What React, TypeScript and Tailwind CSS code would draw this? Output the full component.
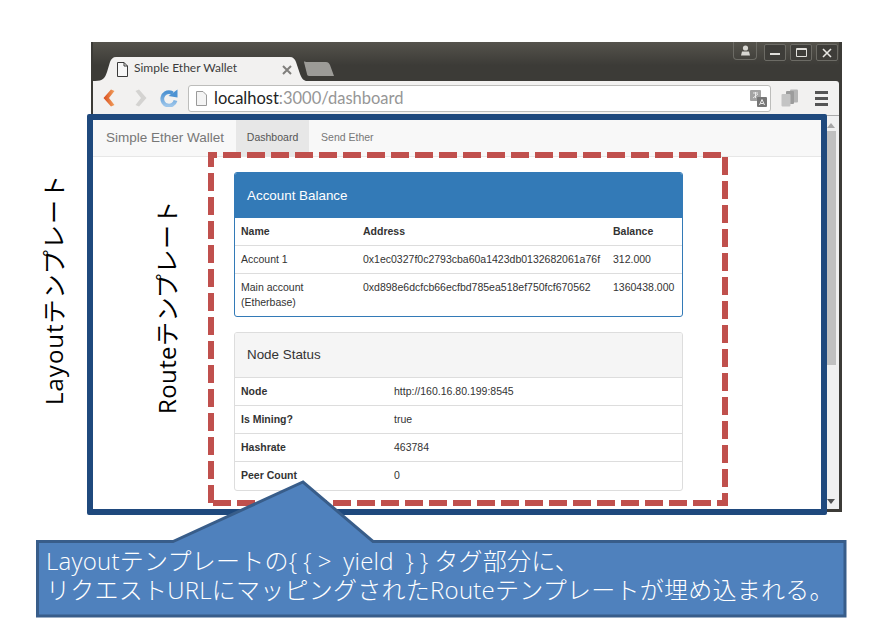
import React from 'react';

const balances = [
  { name: 'Account 1', address: '0x1ec0327f0c2793cba60a1423db0132682061a76f', balance: '312.000' },
  { name: 'Main account (Etherbase)', address: '0xd898e6dcfcb66ecfbd785ea518ef750fcf670562', balance: '1360438.000' },
];

const nodeStatus = [
  { label: 'Node', value: 'http://160.16.80.199:8545' },
  { label: 'Is Mining?', value: 'true' },
  { label: 'Hashrate', value: '463784' },
  { label: 'Peer Count', value: '0' },
];

function WindowButton({ children }: { children: React.ReactNode }) {
  return (
    <div className="flex h-[17px] w-[22px] items-center justify-center rounded-[2px] border border-[#6c6b65] bg-[#3e3d39]">
      {children}
    </div>
  );
}

function TitleBar() {
  return (
    <div className="relative h-[39px] shrink-0 bg-gradient-to-b from-[#55534c] to-[#3c3b37] to-60%">
      {/* tab */}
      <svg className="absolute left-[2px] top-[15px]" width="240" height="25" viewBox="0 0 240 25">
        <path d="M0 24 C8 24 10 21 12 15 L15 5 C16 2 18 0 21 0 L195 0 C198 0 200 2 201 5 L205 17 C207 22 209 24 212 24 Z" fill="#f2f1f0" />
        <path d="M209 5 C209 4 210 5 212 5 L231 5 C233 5 234 6 235 8 L239 19 L214 19 C213 19 212 18 212 17 Z" fill="#9c9b97" />
      </svg>
      <svg className="absolute left-[24px] top-[20px]" width="11" height="15" viewBox="0 0 11 15">
        <path d="M0.5 0.5 H7 L10.5 4 V14.5 H0.5 Z M7 0.5 V4 H10.5" fill="#f7f7f7" stroke="#3a3a3a" strokeWidth="1" />
      </svg>
      <span className="absolute left-[41px] top-[18px] font-['Lato',sans-serif] text-[12px] leading-[16px] text-[#3c3c3c]">
        Simple Ether Wallet
      </span>
      <svg className="absolute left-[189px] top-[23px]" width="10" height="10" viewBox="0 0 10 10">
        <path d="M1 1 L9 9 M9 1 L1 9" stroke="#807f7c" strokeWidth="2" />
      </svg>
      {/* window controls */}
      <div className="absolute right-[1px] top-0 flex items-start">
        <div className="mr-[7px] flex h-[18px] w-[24px] items-center justify-center rounded-b-[4px] border border-t-0 border-[#6c6b65]">
          <svg width="11" height="11" viewBox="0 0 11 11">
            <circle cx="5.5" cy="3" r="2.6" fill="#d8d7d2" />
            <path d="M1 10.5 L2 6.5 H9 L10 10.5 Z" fill="#d8d7d2" />
          </svg>
        </div>
        <div className="mt-[2px] flex gap-[4px]">
          <WindowButton>
            <div className="mt-[3px] h-[2px] w-[10px] bg-[#e0dfdb]" />
          </WindowButton>
          <WindowButton>
            <div className="h-[9px] w-[11px] rounded-[1px] border border-t-2 border-[#e0dfdb]" />
          </WindowButton>
          <WindowButton>
            <svg width="10" height="10" viewBox="0 0 10 10">
              <path d="M1 1 L9 9 M9 1 L1 9" stroke="#e8e7e3" strokeWidth="1.6" />
            </svg>
          </WindowButton>
        </div>
      </div>
    </div>
  );
}

function Toolbar() {
  return (
    <div className="flex h-[35px] shrink-0 items-center rounded-tr-[3px] border-b border-[#a9a9a9] bg-[#f2f1f0]">
      <svg className="ml-[10px]" width="12" height="18" viewBox="0 0 12 18">
        <defs>
          <linearGradient id="back" x1="0" y1="0" x2="1" y2="0">
            <stop offset="0" stopColor="#d84a1b" />
            <stop offset="1" stopColor="#f1a25f" />
          </linearGradient>
          <linearGradient id="reload" x1="0" y1="0" x2="0" y2="1">
            <stop offset="0" stopColor="#4d92d2" />
            <stop offset="1" stopColor="#9cc5ea" />
          </linearGradient>
        </defs>
        <path d="M8 0.5 L11.5 2 L6 9 L11.5 16 L8 17.5 L0.5 9 Z" fill="url(#back)" />
      </svg>
      <svg className="ml-[20px]" width="12" height="18" viewBox="0 0 12 18">
        <path d="M4 0.5 L0.5 2 L6 9 L0.5 16 L4 17.5 L11.5 9 Z" fill="#d4d3d1" />
      </svg>
      <svg className="ml-[13px]" width="18" height="18" viewBox="0 0 18 18">
        <path d="M15.5 11.5 A6.7 6.7 0 1 1 10.5 3.4 A6.7 6.7 0 0 1 12.5 4.4" fill="none" stroke="url(#reload)" strokeWidth="3.8" />
        <path d="M8.5 7 L17.5 8.5 L17.5 0.5 Z" fill="#4d92d2" />
      </svg>
      <div className="relative ml-[10px] flex h-[27px] w-[583px] items-center rounded-[3px] border border-[#bdbdbb] bg-white">
        <svg className="ml-[7px]" width="11" height="15" viewBox="0 0 11 15">
          <path d="M0.5 0.5 H7 L10.5 4 V14.5 H0.5 Z" fill="#f4f4f4" stroke="#9a9a9a" strokeWidth="1" />
        </svg>
        <span className="ml-[7px] font-['Lato',sans-serif] text-[16.5px] leading-[20px] text-[#222]">
          localhost<span className="text-[#969696]">:3000/dashboard</span>
        </span>
        <svg className="absolute left-[561px] top-[4px]" width="17" height="17" viewBox="0 0 17 17">
          <rect x="0" y="0" width="11" height="11" rx="1" fill="#a3a3a3" />
          <rect x="7" y="7" width="10" height="10" rx="1" fill="#777" />
          <path d="M3 3 H8 M5.5 2 V8 M3 8 L8 4" stroke="#eee" strokeWidth="0.9" fill="none" />
          <path d="M9.5 15 L12 9.5 L14.5 15 M10.5 13.5 H13.5" stroke="#eee" strokeWidth="1" fill="none" />
        </svg>
      </div>
      <svg className="ml-[10px]" width="18" height="18" viewBox="0 0 18 18">
        <rect x="9" y="0.5" width="8" height="13" rx="1" fill="#b5b5b5" />
        <rect x="5" y="2" width="8" height="13" rx="1" fill="#9c9c9c" />
        <rect x="0.5" y="5" width="9" height="12.5" rx="1" fill="#c4c4c4" />
      </svg>
      <div className="ml-[16px] flex flex-col gap-[3px]">
        <div className="h-[3px] w-[13px] bg-[#555]" />
        <div className="h-[3px] w-[13px] bg-[#555]" />
        <div className="h-[3px] w-[13px] bg-[#555]" />
      </div>
    </div>
  );
}

function Scrollbar() {
  return (
    <div className="flex w-[13px] shrink-0 flex-col items-start bg-[#f0f0f0]">
      <div className="ml-[1px] mt-[7px] h-0 w-0 border-x-[4px] border-b-[5px] border-x-transparent border-b-[#a6a6a6]" />
      <div className="mt-[3px] h-[234px] w-[10px] bg-[#c0c0c0]" />
      <div className="ml-[1px] mt-[134px] h-0 w-0 border-x-[4px] border-t-[5px] border-x-transparent border-t-[#505050]" />
    </div>
  );
}

function Navbar() {
  return (
    <div className="flex h-[41px] items-stretch border-b border-[#e7e7e7] bg-[#f8f8f8] pl-[13px] text-[#777]">
      <span className="flex items-center pt-[2px] text-[13.5px]">Simple Ether Wallet</span>
      <span className="ml-[12px] flex w-[73px] items-center justify-center bg-[#e7e7e7] pt-[2px] text-[10.5px] text-[#555]">Dashboard</span>
      <span className="ml-[12px] flex items-center pt-[2px] text-[10.5px]">Send Ether</span>
    </div>
  );
}

function Page() {
  return (
    <div className="flex-1 overflow-hidden bg-white font-['Liberation_Sans',sans-serif] text-[10.5px] leading-[15px] text-[#333]">
      <Navbar />
      <div className="ml-[141px] mt-[15px] w-[449px]">
        <div className="overflow-hidden rounded-[3px] border border-[#337ab7]">
          <div className="flex h-[45px] items-center bg-[#337ab7] pb-[1px] pl-[12px] text-[13.4px] text-white">Account Balance</div>
          <table className="w-full table-fixed border-collapse">
            <thead>
              <tr className="h-[27px] border-b border-[#ddd] text-left font-bold">
                <th className="w-[122px] pl-[6px]">Name</th>
                <th className="w-[250px] pl-[6px]">Address</th>
                <th className="pl-[6px]">Balance</th>
              </tr>
            </thead>
            <tbody>
              {balances.map((row, i) => (
                <tr key={row.name} className={i === 0 ? 'border-b border-[#ddd]' : ''}>
                  <td className="py-[6px] pl-[6px] pr-[14px] align-top">{row.name}</td>
                  <td className="py-[6px] pl-[6px] align-top">{row.address}</td>
                  <td className="py-[6px] pl-[6px] align-top">{row.balance}</td>
                </tr>
              ))}
            </tbody>
          </table>
        </div>

        <div className="mt-[15px] overflow-hidden rounded-[3px] border border-[#ddd]">
          <div className="flex h-[45px] items-center border-b border-[#ddd] bg-[#f5f5f5] pl-[12px] text-[13.4px]">Node Status</div>
          <table className="w-full table-fixed border-collapse">
            <tbody>
              {nodeStatus.map((row, i) => (
                <tr key={row.label} className={`h-[28px] ${i < 3 ? 'border-b border-[#ddd]' : ''}`}>
                  <td className="w-[153px] pl-[6px] font-bold">{row.label}</td>
                  <td className="pl-[6px]">{row.value}</td>
                </tr>
              ))}
            </tbody>
          </table>
        </div>
      </div>
    </div>
  );
}

export default function App() {
  return (
    <div className="relative h-[643px] w-[877px] overflow-hidden bg-white pl-[91px] pt-[42px]">
      {/* browser window */}
      <div className="flex h-[470px] w-[751px] flex-col bg-[#3c3b37] pb-[3px] pl-[2px] pr-[3px]">
        <TitleBar />
        <Toolbar />
        <div className="flex min-h-0 flex-1">
          <Page />
          <Scrollbar />
        </div>
      </div>

      {/* annotations */}
      <div className="absolute left-[87px] top-[114px] h-[401px] w-[740px] rounded-[2px] border-[6px] border-[#1f497d]" />
      <svg className="absolute left-0 top-0" width="877" height="643" viewBox="0 0 877 643">
        <g fill="none" stroke="#c0504d" strokeWidth="6" strokeDasharray="18 6">
          <path d="M208 155 H722" strokeDashoffset="9" />
          <path d="M725 157 V506" />
          <path d="M213 503 H728" />
          <path d="M211 152 V506" strokeDashoffset="3" />
        </g>
        <path
          d="M37.5 541.5 H173 L303 482 L373 541.5 H845 V616 H37.5 Z"
          fill="#4f81bd"
          stroke="#385d8a"
          strokeWidth="3"
        />
      </svg>
      <div className="absolute left-[46px] top-[546px] whitespace-nowrap font-['Open_Sans','Noto_Sans_CJK_JP',sans-serif] text-[24px] font-light leading-[29px] tracking-[0.25px] text-white">
        <div>
          Layoutテンプレートの<span className="tracking-[6px]">{'{{'}</span>&gt;
          <span className="[word-spacing:5px]"> yield </span>
          <span className="tracking-[6px]">{'}}'}</span>タグ部分に、
        </div>
        <div>リクエストURLにマッピングされたRouteテンプレートが埋め込まれる。</div>
      </div>
      <div className="absolute left-[42px] top-[180px] h-[225px] whitespace-nowrap font-['Open_Sans','Noto_Sans_CJK_JP',sans-serif] text-[24px] leading-[24px] tracking-[1px] text-black [text-orientation:sideways] [writing-mode:vertical-rl] rotate-180">
        Layoutテンプレート
      </div>
      <div className="absolute left-[155px] top-[202px] h-[212px] whitespace-nowrap font-['Open_Sans','Noto_Sans_CJK_JP',sans-serif] text-[24px] leading-[24px] tracking-[0.4px] text-black [text-orientation:sideways] [writing-mode:vertical-rl] rotate-180">
        Routeテンプレート
      </div>
    </div>
  );
}
